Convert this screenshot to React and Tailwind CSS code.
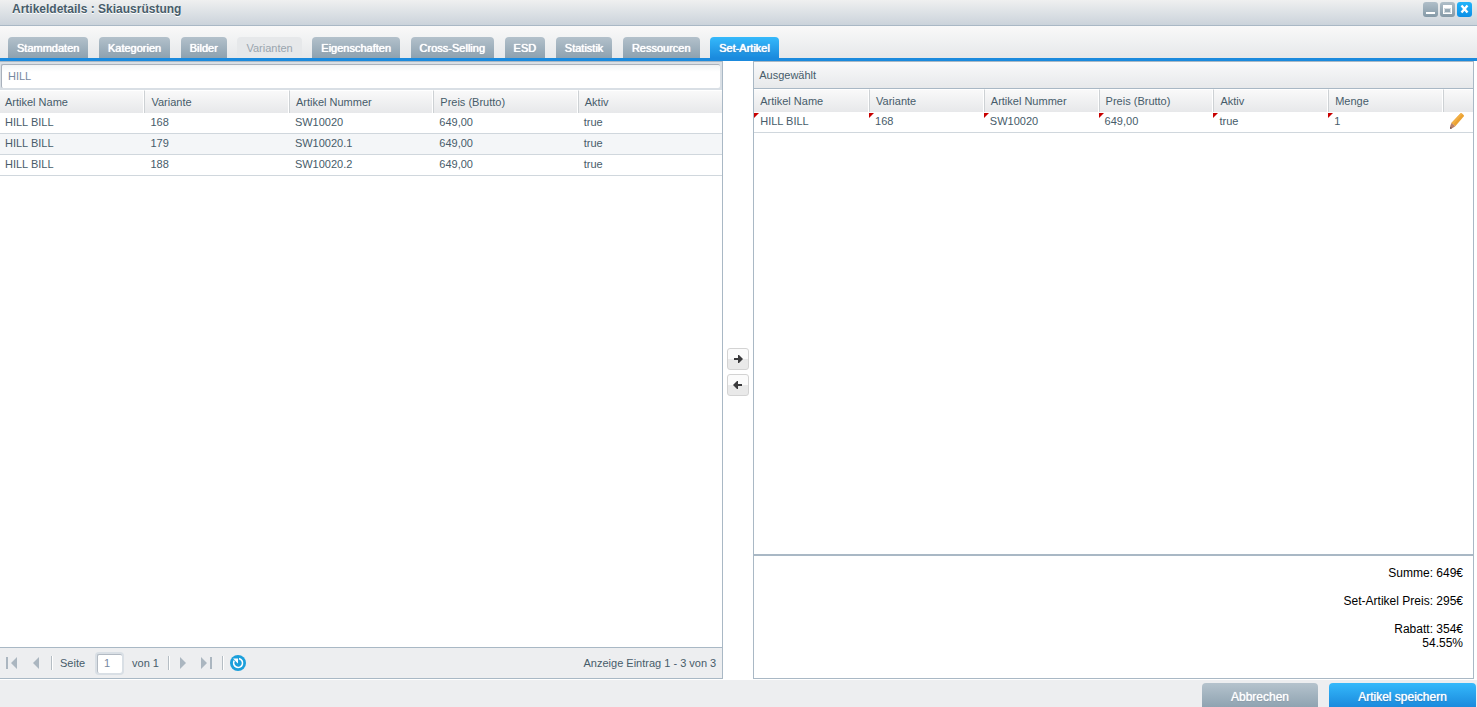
import React from "react";

const tabs = [
  { label: "Stammdaten" },
  { label: "Kategorien" },
  { label: "Bilder" },
  { label: "Varianten", disabled: true },
  { label: "Eigenschaften" },
  { label: "Cross-Selling" },
  { label: "ESD" },
  { label: "Statistik" },
  { label: "Ressourcen" },
  { label: "Set-Artikel", active: true },
];

const columns = ["Artikel Name", "Variante", "Artikel Nummer", "Preis (Brutto)", "Aktiv"];

const articles = [
  ["HILL BILL", "168", "SW10020", "649,00", "true"],
  ["HILL BILL", "179", "SW10020.1", "649,00", "true"],
  ["HILL BILL", "188", "SW10020.2", "649,00", "true"],
];

const selected = [["HILL BILL", "168", "SW10020", "649,00", "true", "1"]];

const tabStyle = (tab) => {
  const base = "h-[21px] px-[9px] rounded-t text-[11px] leading-[23px] whitespace-nowrap ";
  if (tab.disabled) return base + "bg-[#e6e8ea] text-[#9aa5ae]";
  if (tab.active)
    return base + "bg-linear-to-b from-[#35b9fb] to-[#1b8add] text-white [text-shadow:0_0_1px_#fff,0_0_1px_#fff,0_1px_1px_#1470b8]";
  return base + "bg-linear-to-b from-[#b3c1cb] to-[#8da1b0] text-white [text-shadow:0_0_1px_#fff,0_0_1px_#fff,0_1px_1px_#7d909e]";
};

function WindowButtons() {
  return (
    <div className="flex gap-0.5 pt-0.5">
      <button aria-label="Minimieren" className="h-[15px] w-[15px] rounded-[3px] bg-linear-to-b from-[#b0bfc9] to-[#8599a7]">
        <svg viewBox="0 0 15 15" className="block h-[15px] w-[15px]">
          <path d="M3 10h9v2H3z" fill="#fff" />
        </svg>
      </button>
      <button aria-label="Maximieren" className="h-[15px] w-[15px] rounded-[3px] bg-linear-to-b from-[#b0bfc9] to-[#8599a7]">
        <svg viewBox="0 0 15 15" className="block h-[15px] w-[15px]">
          <path d="M3 3h9v9H3zM4 6v5h7V6z" fill="#fff" fillRule="evenodd" />
          <path d="M4.5 6.5h6v4h-6z" fill="none" stroke="#fff" strokeOpacity=".6" />
        </svg>
      </button>
      <button aria-label="Schließen" className="h-[15px] w-[15px] rounded-[3px] bg-linear-to-b from-[#22b4fa] to-[#0c8fe6]">
        <svg viewBox="0 0 15 15" className="block h-[15px] w-[15px]">
          <path d="M4.5 3.5l6 7M10.5 3.5l-6 7" stroke="#fff" strokeWidth="2.4" />
        </svg>
      </button>
    </div>
  );
}

function HeaderCell({ children, first, className, label }) {
  return (
    <th
      aria-label={label}
      className={`h-[23px] border-t border-t-white p-0 text-left font-normal ${
        first ? "" : "border-l border-l-[#cdd1d4] shadow-[-1px_0_0_#fff]"
      } ${className}`}
    >
      {children}
    </th>
  );
}

function PencilIcon() {
  return (
    <svg viewBox="0 0 16 16" className="block h-4 w-4">
      <path d="M11.4.6Q12 0 12.8.5l1.9 1.6q.6.7 0 1.4L6.3 13.2 2.4 10z" fill="#eba232" />
      <path d="M11.4.6Q12 0 12.8.5l.7.6L4.2 11.5 2.4 10z" fill="#f1ae45" />
      <path d="M2.4 10l3.9 3.2-2.3 1.6L1.2 16V13z" fill="#b98069" />
      <path d="M1.2 13.8L3.2 15.2 1.2 16z" fill="#6d4d49" />
    </svg>
  );
}

function RefreshIcon() {
  return (
    <svg viewBox="0 0 16 16" className="block h-4 w-4">
      <circle cx="8" cy="8" r="8" fill="#1b9fdb" />
      <path d="M9 3.6A4.5 4.5 0 1 1 4.2 5.7" fill="none" stroke="#fff" strokeWidth="1.6" />
      <path d="M3 3.6h5v5L6.3 6.9 5 5.4z" fill="#fff" />
    </svg>
  );
}

function Separator() {
  return <span className="h-[14px] w-0.5 border-l border-[#b5bdc4] bg-white" />;
}

function Pager() {
  return (
    <div className="flex h-[31px] items-center border-t border-[#a9b8c5] bg-[#edeef0] pr-1.5">
      <button aria-label="Erste Seite" className="pl-1.5">
        <svg viewBox="0 0 11 12" className="block h-3 w-[11px]" fill="#abb6c0">
          <path d="M0 0h2v12H0zM11 0v12L5 6z" />
        </svg>
      </button>
      <button aria-label="Vorherige Seite" className="px-3 pl-4">
        <svg viewBox="0 0 6 12" className="block h-3 w-1.5" fill="#abb6c0">
          <path d="M6 0v12L0 6z" />
        </svg>
      </button>
      <Separator />
      <label htmlFor="page" className="pl-[7px]">
        Seite
      </label>
      <input
        id="page"
        defaultValue="1"
        className="ml-3 h-[19px] w-[25px] rounded-[2px] border-t border-l border-[#b3bac3] bg-white px-1.5 pb-px text-[#7688a0] shadow-[0_0_0_2px_#d9dfe5] outline-none"
      />
      <span className="pl-2.5 pr-[9px]">von 1</span>
      <Separator />
      <button aria-label="Nächste Seite" className="pl-2.5">
        <svg viewBox="0 0 6 12" className="block h-3 w-1.5" fill="#abb6c0">
          <path d="M0 0v12L6 6z" />
        </svg>
      </button>
      <button aria-label="Letzte Seite" className="pl-[15px] pr-2.5">
        <svg viewBox="0 0 11 12" className="block h-3 w-[11px]" fill="#abb6c0">
          <path d="M9 0h2v12H9zM0 0v12l6-6z" />
        </svg>
      </button>
      <Separator />
      <button aria-label="Aktualisieren" className="pl-1.5">
        <RefreshIcon />
      </button>
      <span className="ml-auto">Anzeige Eintrag 1 - 3 von 3</span>
    </div>
  );
}

function ArticleList() {
  return (
    <section className="flex min-w-0 flex-1 flex-col border-y border-r border-[#a9b8c5]">
      <div className="bg-[#d9dfe5] py-0.5 pr-0.5 pl-px">
        <input
          aria-label="Suche"
          defaultValue="HILL"
          className="block h-6 w-full rounded-[2px] border-t border-l border-[#a9b1bc] bg-linear-to-b from-[#f0f3f5] to-white to-30% px-1.5 pb-0.5 text-[#7688a0] outline-none"
        />
      </div>
      <table className="w-full table-fixed border-separate border-spacing-0">
        <thead>
          <tr className="bg-linear-to-b from-[#fafafa] to-[#e7e8ea]">
            {columns.map((name, i) => (
              <HeaderCell key={name} first={i === 0} className={i === 0 ? "pl-[5px]" : "pl-1.5"}>
                {name}
              </HeaderCell>
            ))}
          </tr>
        </thead>
        <tbody>
          {articles.map((row) => (
            <tr key={row[2]} className="even:bg-[#f4f6f8]">
              {row.map((value, i) => (
                <td
                  key={i}
                  className={`h-[21px] border-b border-[#d0d7dd] p-0 pb-0.5 ${i === 0 ? "pl-[5px]" : "pl-1.5"}`}
                >
                  {value}
                </td>
              ))}
            </tr>
          ))}
        </tbody>
      </table>
      <div className="flex-1" />
      <Pager />
    </section>
  );
}

function MoveButtons() {
  return (
    <div className="flex w-[30px] flex-col items-center justify-center gap-1 pt-1">
      <button
        aria-label="Hinzufügen"
        className="flex h-[22px] w-[22px] items-center justify-center rounded-[3px] border border-[#d3d3d3] bg-linear-to-b from-[#fbfbfb] from-50% to-[#e9e9e9] to-50%"
      >
        <svg viewBox="0 0 10 10" className="h-2.5 w-2.5" fill="#3a3a3c">
          <path d="M1 4h4V1h1l4 4-4 4H5V6H1z" />
        </svg>
      </button>
      <button
        aria-label="Entfernen"
        className="flex h-[22px] w-[22px] items-center justify-center rounded-[3px] border border-[#d3d3d3] bg-linear-to-b from-[#fbfbfb] from-50% to-[#e9e9e9] to-50%"
      >
        <svg viewBox="0 0 10 10" className="h-2.5 w-2.5" fill="#3a3a3c">
          <path d="M9 4H5V1H4L0 5l4 4h1V6h4z" />
        </svg>
      </button>
    </div>
  );
}

function SelectedList() {
  return (
    <section className="flex w-[48.9%] flex-col border border-[#a9b8c5]">
      <h2 className="h-[27px] border-b border-[#a9b8c5] bg-linear-to-b from-[#f9f9fa] to-[#e7e9eb] pl-[5px] leading-[26px]">
        Ausgewählt
      </h2>
      <table className="w-full table-fixed border-separate border-spacing-0">
        <thead>
          <tr className="bg-linear-to-b from-[#fafafa] to-[#e7e8ea]">
            {[...columns, "Menge"].map((name, i) => (
              <HeaderCell key={name} first={i === 0} className="pl-1.5">
                {name}
              </HeaderCell>
            ))}
            <HeaderCell label="Bearbeiten" className="w-[30px]" />
          </tr>
        </thead>
        <tbody>
          {selected.map((row) => (
            <tr key={row[2]}>
              {row.map((value, i) => (
                <td key={i} className="relative h-[21px] border-b border-[#d0d7dd] p-0 pl-1.5 pb-0.5">
                  {/* dirty marker */}
                  <svg viewBox="0 0 5 5" className="absolute top-px left-0 h-[5px] w-[5px]">
                    <path d="M0 0h5L0 5z" fill="#c80000" />
                  </svg>
                  {value}
                </td>
              ))}
              <td className="h-[21px] border-b border-[#d0d7dd] p-0 pb-0.5 pl-1.5">
                <button aria-label="Menge bearbeiten" className="block">
                  <PencilIcon />
                </button>
              </td>
            </tr>
          ))}
        </tbody>
      </table>
      <div className="flex-1" />
      <div className="h-[124px] border-t-2 border-[#a9b8c5] pt-2.5 pr-2.5 text-right text-xs leading-[14px] text-black">
        <p className="mb-[14px]">Summe: 649€</p>
        <p className="mb-[14px]">Set-Artikel Preis: 295€</p>
        <p>Rabatt: 354€</p>
        <p>54.55%</p>
      </div>
    </section>
  );
}

export default function App() {
  return (
    <div className="flex min-h-screen flex-col bg-white font-['Liberation_Sans',Arial,sans-serif] text-[11px] leading-[14px] text-[#475c6a]">
      <header className="flex h-[26px] justify-between border-b border-[#a9b8c5] bg-linear-to-b from-[#eff0f0] to-[#cbd3db] pr-[5px] pl-3">
        <h1 className="text-xs leading-[18px] font-bold [text-shadow:0_1px_0_#fff]">Artikeldetails : Skiausrüstung</h1>
        <WindowButtons />
      </header>

      <nav className="flex h-[35px] items-end border-b-3 border-[#1b8add] bg-linear-to-b from-[#f9f9f9] to-[#e6e8ea] pl-2">
        <div className="flex w-[771px] justify-between">
          {tabs.map((tab) => (
            <button key={tab.label} disabled={tab.disabled} className={tabStyle(tab)}>
              {tab.label}
            </button>
          ))}
        </div>
      </nav>

      <main className="flex flex-1 pr-[3px]">
        <ArticleList />
        <MoveButtons />
        <SelectedList />
      </main>

      <footer className="mt-px flex h-[27px] items-end justify-end gap-[11px] bg-[#edeef0] pr-px text-xs">
        <button className="h-6 w-[116px] rounded-t bg-linear-to-b from-[#b5c3cd] to-[#8fa3b1] pt-1 text-white [text-shadow:0_0_1px_#fff,0_1px_1px_#7d909e]">
          Abbrechen
        </button>
        <button className="h-6 w-[147px] rounded-t bg-linear-to-b from-[#35b9fb] to-[#1b8add] pt-1 text-white [text-shadow:0_0_1px_#fff,0_1px_1px_#1470b8]">
          Artikel speichern
        </button>
      </footer>
    </div>
  );
}
